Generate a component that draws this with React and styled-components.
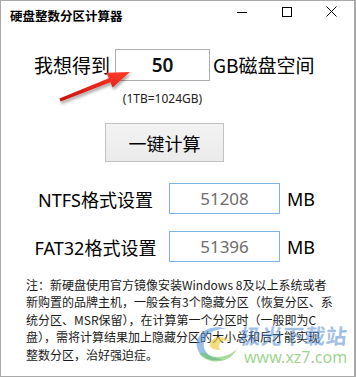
import React from "react";
import styled, { createGlobalStyle } from "styled-components";

const Global = createGlobalStyle`
  html, body { margin: 0; padding: 0; background: #fff; }
  body { font-family: "Noto Sans", "Noto Sans CJK SC", sans-serif; }
  * { box-sizing: border-box; }
`;

const Window = styled.div`
  position: relative;
  width: 356px;
  height: 377px;
  border: 1px solid #a9a9a9;
  border-right-width: 2px;
  background: #fff;
  display: flex;
  flex-direction: column;
  overflow: hidden;
  color: #000;
`;

const TitleBar = styled.div`
  height: 29px;
  display: flex;
  align-items: center;
  padding-left: 9px;
`;

const Title = styled.div`
  font-family: "Noto Sans CJK SC", sans-serif;
  font-size: 12.5px;
  font-weight: 700;
  line-height: 16px;
`;

const Controls = styled.div`
  margin-left: auto;
  display: flex;
  align-self: flex-start;
`;

const ControlButton = styled.div`
  width: 45px;
  height: 21px;
  display: flex;
  align-items: center;
  justify-content: center;
`;

const Row = styled.div`
  display: flex;
  align-items: flex-start;
  margin-top: ${(p) => p.$top}px;
  padding-left: ${(p) => p.$left}px;
`;

const BigLabel = styled.div`
  font-family: "Noto Sans CJK SC", sans-serif;
  font-size: 19px;
  line-height: 32px;
  width: ${(p) => (p.$width ? `${p.$width}px` : "auto")};
  text-align: ${(p) => p.$align || "left"};
  margin-left: ${(p) => p.$ml || 0}px;
  white-space: nowrap;
`;

const InputCol = styled.div`
  width: 95px;
  margin-left: 5px;
  display: flex;
  flex-direction: column;
  align-items: center;
`;

const AmountBox = styled.div`
  width: 95px;
  height: 32px;
  border: 1px solid #adadad;
  display: flex;
  align-items: center;
  justify-content: center;
  font-family: "Noto Sans", sans-serif;
  font-size: 19px;
  font-weight: 600;
  color: #111;
`;

const Hint = styled.div`
  margin-top: 11px;
  font-family: "Noto Sans", sans-serif;
  font-size: 12px;
  line-height: 14px;
  color: #222;
  white-space: nowrap;
`;

const Button = styled.div`
  margin-top: 17px;
  margin-left: 104px;
  width: 119px;
  height: 39px;
  border: 1px solid #c2c2c2;
  background: linear-gradient(#f3f3f3, #ebebeb);
  display: flex;
  align-items: center;
  justify-content: center;
  font-family: "Noto Sans CJK SC", sans-serif;
  font-size: 18px;
  color: #000;
`;

const FieldRow = styled.div`
  display: flex;
  align-items: center;
  margin-top: ${(p) => p.$top}px;
  padding-left: 21px;
  height: 31px;
`;

const FieldLabel = styled.div`
  width: 147px;
  text-align: center;
  font-family: "Noto Sans", "Noto Sans CJK SC", sans-serif;
  font-size: 18px;
  white-space: nowrap;
`;

const ResultBox = styled.div`
  width: 111px;
  height: 31px;
  border: 1px solid #7eb4ea;
  display: flex;
  align-items: center;
  justify-content: center;
  font-family: "Noto Sans", sans-serif;
  font-size: 17px;
  color: #6d6d6d;
`;

const Unit = styled.div`
  margin-left: 7px;
  font-family: "Noto Sans", sans-serif;
  font-size: 18px;
`;

const Notes = styled.div`
  margin-top: 14px;
  padding-left: 25px;
  font-family: "Noto Sans CJK SC", sans-serif;
  font-size: 12px;
  line-height: 17.4px;
  color: #1a1a1a;
`;

const NoteLine = styled.div`
  white-space: nowrap;
`;

const Overlay = styled.svg`
  position: absolute;
  left: -1px;
  top: -1px;
  pointer-events: none;
`;

const Watermark = styled.div`
  position: absolute;
  left: 192px;
  top: 322px;
  display: flex;
  align-items: flex-start;
  pointer-events: none;
`;

const WmText = styled.div`
  display: flex;
  flex-direction: column;
  margin-left: 1px;
`;

const WmName = styled.div`
  font-family: "Noto Sans CJK SC", sans-serif;
  font-size: 21px;
  font-weight: 700;
  line-height: 25px;
  letter-spacing: 0.5px;
  color: rgba(70, 130, 205, 0.5);
  transform: skewX(-6deg);
`;

const WmUrl = styled.div`
  font-family: "Noto Sans", sans-serif;
  font-size: 16px;
  line-height: 18px;
  margin-left: 4px;
  color: rgba(100, 190, 80, 0.65);
  white-space: nowrap;
`;

export default function App() {
  return (
    <>
      <Global />
      <Window>
        <TitleBar>
          <Title>硬盘整数分区计算器</Title>
          <Controls>
            <ControlButton>
              <svg width="10" height="10" viewBox="0 0 10 10">
                <line x1="0" y1="5.5" x2="10" y2="5.5" stroke="#000" strokeWidth="1" />
              </svg>
            </ControlButton>
            <ControlButton>
              <svg width="10" height="10" viewBox="0 0 10 10">
                <rect x="0.5" y="0.5" width="9" height="9" fill="none" stroke="#000" strokeWidth="1" />
              </svg>
            </ControlButton>
            <ControlButton>
              <svg width="11" height="11" viewBox="0 0 11 11">
                <path d="M0.5 0.5 L10.5 10.5 M10.5 0.5 L0.5 10.5" stroke="#000" strokeWidth="1" />
              </svg>
            </ControlButton>
          </Controls>
        </TitleBar>

        <Row $top={19} $left={27}>
          <BigLabel $width={82} $align="right">我想得到</BigLabel>
          <InputCol>
            <AmountBox>50</AmountBox>
            <Hint>(1TB=1024GB)</Hint>
          </InputCol>
          <BigLabel $ml={3}>GB磁盘空间</BigLabel>
        </Row>

        <Button>一键计算</Button>

        <FieldRow $top={21}>
          <FieldLabel>NTFS格式设置</FieldLabel>
          <ResultBox>51208</ResultBox>
          <Unit>MB</Unit>
        </FieldRow>
        <FieldRow $top={17}>
          <FieldLabel>FAT32格式设置</FieldLabel>
          <ResultBox>51396</ResultBox>
          <Unit>MB</Unit>
        </FieldRow>

        <Notes>
          <NoteLine>注：新硬盘使用官方镜像安装Windows 8及以上系统或者</NoteLine>
          <NoteLine>新购置的品牌主机，一般会有3个隐藏分区（恢复分区、系</NoteLine>
          <NoteLine>统分区、MSR保留），在计算第一个分区时（一般即为C</NoteLine>
          <NoteLine>盘），需将计算结果加上隐藏分区的大小总和后才能实现</NoteLine>
          <NoteLine>整数分区，治好强迫症。</NoteLine>
        </Notes>

        <Watermark>
          <svg width="46" height="42" viewBox="0 0 46 42">
            <path d="M34 6 C 18 0, 2 10, 4 24 C 6 34, 18 40, 30 36 C 18 36, 9 29, 11 19 C 13 10, 24 5, 34 6 Z" fill="rgba(70,140,215,0.55)" />
            <path d="M6 30 C 14 42, 36 42, 44 26 C 36 34, 22 37, 12 30 Z" fill="rgba(110,195,90,0.6)" />
            <path d="M17 21 C 18 14, 30 11, 36 18 C 29 16, 24 20, 27 27 C 21 27, 16 25, 17 21 Z" fill="rgba(240,205,60,0.65)" />
          </svg>
          <WmText>
            <WmName>极光下载站</WmName>
            <WmUrl>www.xz7.com</WmUrl>
          </WmText>
        </Watermark>

        <Overlay width="356" height="377" viewBox="0 0 356 377">
          <defs>
            <linearGradient id="arrowFill" x1="0" y1="0" x2="0" y2="1">
              <stop offset="0" stopColor="#ff3a2a" />
              <stop offset="1" stopColor="#c8100c" />
            </linearGradient>
            <filter id="arrowShadow" x="-20%" y="-20%" width="140%" height="160%">
              <feDropShadow dx="1" dy="2.5" stdDeviation="1.5" floodColor="#000" floodOpacity="0.35" />
            </filter>
          </defs>
          <polygon
            points="59.4,98.6 108.8,78.2 106.6,72.8 130,72 112.6,87.6 110.4,82.2 60.6,101.4"
            fill="url(#arrowFill)"
            filter="url(#arrowShadow)"
          />
        </Overlay>
      </Window>
    </>
  );
}
